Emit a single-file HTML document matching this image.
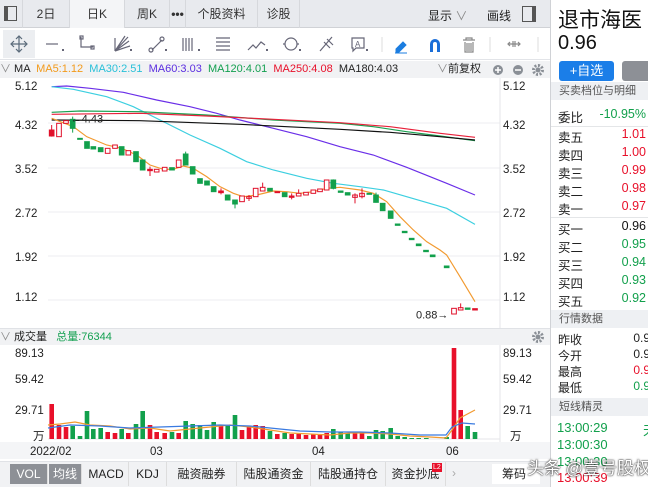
<!DOCTYPE html>
<html><head><meta charset="utf-8"><style>
*{margin:0;padding:0;box-sizing:border-box}
body{width:648px;height:487px;overflow:hidden;background:#fff;font-family:"Liberation Sans","Noto Sans CJK SC",sans-serif;position:relative;color:#222}
.a{position:absolute;white-space:nowrap}
.tab{position:absolute;top:0;height:28px;line-height:28px;font-size:12px;text-align:center;color:#333;border-right:1px solid #d6d8dc}
.r{position:absolute;left:558px;font-size:12.5px;width:90px}
.r span{position:absolute;right:2px}
.hd{position:absolute;left:551px;width:97px;height:18px;background:#eef0f3;font-size:11px;color:#555;padding-left:8px;line-height:18px}
.bt{position:absolute;top:462px;height:24px;line-height:24px;font-size:12px;color:#222;text-align:center;border-right:1px solid #ddd}
</style></head><body>
<div class="a" style="left:0;top:0;width:550px;height:28px;background:#e8eaee;border-bottom:1px solid #d0d2d6"></div>
<div class="a" style="left:4px;top:6px;width:13px;height:15px;border:1.5px solid #555;border-left-width:4px"></div>
<div class="tab" style="left:22px;width:48px;border-left:1px solid #d6d8dc">2日</div>
<div class="tab" style="left:70px;width:55px;background:#f4f5f7">日K</div>
<div class="tab" style="left:125px;width:45px">周K</div>
<div class="tab" style="left:170px;width:16px;font-weight:bold">•••</div>
<div class="tab" style="left:186px;width:72px">个股资料</div>
<div class="tab" style="left:258px;width:42px">诊股</div>
<div class="a" style="left:428px;top:7px;font-size:12px">显示 <span style="color:#888">∨</span></div>
<div class="a" style="left:487px;top:7px;font-size:12px">画线</div>
<div class="a" style="left:522px;top:6px;width:14px;height:16px;border:1.5px solid #555;border-right-width:4px"></div>
<div class="a" style="left:0;top:29px;width:550px;height:31px;background:#fff;border-bottom:1px solid #e2e4e8"></div>
<div class="a" style="left:3px;top:30px;width:32px;height:28px;background:#eceef1"></div>
<svg class="a" style="left:0;top:29px" width="550" height="31">
<g stroke="#667" stroke-width="1.2" fill="none">
<path d="M11 15h16M19 7v16M14 12l-3 3 3 3M24 12l3 3-3 3M16 10l3-3 3 3M16 20l3 3 3-3" stroke="#5a6a7a"/>
<path d="M46 15h12"/><path d="M81 8v10h12"/><rect x="80" y="7" width="3" height="3"/><rect x="91" y="17" width="3" height="3"/>
<path d="M115 22l14-10M115 22l13-14M115 22l10-15M115 22l15-5M115 22v-13"/>
<path d="M152 21l10-10"/><circle cx="151" cy="21" r="2"/><circle cx="162" cy="10" r="2"/>
<path d="M183 9v13M186 9v13M189 9v13M192 9v13"/>
<path d="M216 9h14M216 13h14M216 17h14M216 21h14"/>
<path d="M248 21l5-5 3 3 5-6 4 3"/>
<circle cx="291" cy="15" r="6"/><path d="M283 15h2M297 15h2"/>
<path d="M320 22l12-14M324 13l6 6M327 10l6 6"/>
<path d="M352 9h12v10h-8l-3 3v-3h-1z"/>
</g>
<g fill="#667"><path d="M62 20h2v2h-2zM130 20h2v2h-2zM165 20h2v2h-2zM198 20h2v2h-2zM266 20h2v2h-2zM299 20h2v2h-2zM366 20h2v2h-2z"/></g>
<text x="355" y="18" font-size="8" fill="#667" font-family="Liberation Sans">A</text>
<line x1="382" y1="8" x2="382" y2="23" stroke="#ddd"/>
<path d="M396 20l7-7 3 3-7 7h-3z M395 24h12" fill="#1b7de0" stroke="#1b7de0" stroke-width="1"/>
<path d="M430 23v-8a5 5 0 0 1 10 0v8h-3v-8a2 2 0 0 0-4 0v8z" fill="#1b6ed8"/>
<path d="M463 11h12M466 11v-2h6v2M465 13v10h8v-10M467 14v8M469 14v8M471 14v8" stroke="#888" fill="none" stroke-width="1.2"/>
<line x1="490" y1="8" x2="490" y2="23" stroke="#ddd"/>
<path d="M508 15h12M513 12v6M515 12v6M510 13l-2 2 2 2M518 13l2 2-2 2" stroke="#888" fill="none" stroke-width="1.2"/>
<line x1="538" y1="8" x2="538" y2="23" stroke="#ddd"/>
</svg>
<div class="a" style="left:0;top:61px;width:550px;height:17px;background:#f1f2f4;font-size:11px;line-height:17px">
<span style="color:#888">∨</span> MA &nbsp;<span style="color:#f29a1a">MA5:1.12</span> &nbsp;<span style="color:#28c0d8">MA30:2.51</span> &nbsp;<span style="color:#5a2ee0">MA60:3.03</span> &nbsp;<span style="color:#13a050">MA120:4.01</span> &nbsp;<span style="color:#e8102a">MA250:4.08</span> &nbsp;<span>MA180:4.03</span></div>
<div class="a" style="left:437px;top:62px;font-size:11px;line-height:15px"><span style="color:#888">∨</span>前复权</div>
<svg class="a" style="left:490px;top:62px" width="56" height="16"><circle cx="8" cy="8" r="5" fill="#8a8f96"/><path d="M5 8h6M8 5v6" stroke="#fff" stroke-width="1.5"/><circle cx="28" cy="8" r="5" fill="#8a8f96"/><path d="M25 8h6" stroke="#fff" stroke-width="1.5"/><circle cx="48" cy="8" r="4.5" fill="none" stroke="#8a8f96" stroke-width="3" stroke-dasharray="2 1.5"/><circle cx="48" cy="8" r="2.5" fill="#8a8f96"/></svg>
<svg class="a" style="left:0;top:78px" width="550" height="250" font-family="Liberation Sans" font-size="11.5" fill="#222">
<g stroke="#eceef0"><line x1="48" y1="45" x2="500" y2="45"/><line x1="48" y1="90" x2="500" y2="90"/><line x1="48" y1="134" x2="500" y2="134"/><line x1="48" y1="178" x2="500" y2="178"/><line x1="48" y1="222" x2="500" y2="222"/></g>
<line x1="500" y1="0" x2="500" y2="250" stroke="#e4e6e8"/>
<text x="15" y="12">5.12</text><text x="15" y="51">4.32</text><text x="15" y="95">3.52</text><text x="15" y="139">2.72</text><text x="15" y="183">1.92</text><text x="15" y="223">1.12</text>
<text x="503" y="12">5.12</text><text x="503" y="51">4.32</text><text x="503" y="95">3.52</text><text x="503" y="139">2.72</text><text x="503" y="183">1.92</text><text x="503" y="223">1.12</text>
</svg>
<svg class="a" style="left:40px;top:80px" width="460" height="248" viewBox="0 0 1380 744">
<g fill="none" stroke-width="3.5">
<polyline stroke="#6a2ee8" points="35,20 80,18 150,25 250,37 350,60 450,80 530,100 600,120 700,145 800,170 900,200 1000,225 1100,262 1220,310 1305,345"/>
<polyline stroke="#3ccfe0" points="35,20 100,28 200,50 280,80 360,120 450,165 540,205 620,245 700,270 800,295 880,310 960,320 1030,330 1100,350 1220,385 1305,433"/>
<polyline stroke="#1aa050" points="35,97 120,93 300,95 500,105 700,120 900,130 1000,140 1100,155 1200,168 1305,182"/>
<polyline stroke="#e8203a" points="35,103 300,100 500,108 700,118 900,128 1050,140 1200,160 1305,172"/>
<polyline stroke="#111" points="35,120 300,122 600,133 900,148 1050,157 1200,170 1305,180"/>
<polyline stroke="#f29a30" points="35,115 100,140 140,170 200,195 245,205 290,225 330,255 370,268 400,268 430,258 460,265 500,290 540,320 580,340 610,350 650,345 700,333 740,335 780,340 820,335 860,325 900,322 960,330 1000,340 1040,365 1080,410 1120,450 1160,485 1200,510 1220,525 1260,590 1305,665"/>
</g>
<g fill="#fff" stroke="#e0102a" stroke-width="3">
<rect x="28" y="150" width="14" height="18" fill="#e0102a"/><rect x="50" y="130" width="14" height="40"/><rect x="71" y="122" width="14" height="8"/>
<rect x="196" y="205" width="14" height="15"/><rect x="218" y="195" width="14" height="10"/><rect x="258" y="212" width="14" height="13"/>
<rect x="323" y="268" width="14" height="4" fill="#e0102a"/><rect x="343" y="268" width="14" height="8"/><rect x="367" y="262" width="14" height="11"/>
<rect x="409" y="240" width="14" height="22"/><rect x="536" y="333" width="14" height="5" fill="#e0102a"/><rect x="599" y="348" width="14" height="17"/>
<rect x="620" y="350" width="14" height="5"/><rect x="640" y="325" width="14" height="25"/><rect x="661" y="322" width="14" height="11"/>
<rect x="705" y="335" width="14" height="3" fill="#e0102a"/><rect x="748" y="348" width="14" height="4" fill="#e0102a"/><rect x="769" y="340" width="14" height="8"/>
<rect x="791" y="337" width="14" height="8"/><rect x="813" y="330" width="14" height="10"/><rect x="833" y="327" width="14" height="8"/>
<rect x="853" y="300" width="14" height="30"/><rect x="938" y="345" width="14" height="7"/><rect x="959" y="340" width="14" height="10"/>
<rect x="1235" y="685" width="14" height="17"/><rect x="1255" y="683" width="14" height="7"/><rect x="1298" y="686" width="14" height="4" fill="#e0102a"/>
</g>
<g stroke="#e0102a" stroke-width="3"><path d="M35 135v35M330 260v28M543 325v18M627 345v18M668 308v15M755 340v18M776 328v12M945 340v30M966 325v30M1262 670v15"/></g>
<g fill="#12a04c" stroke="#12a04c" stroke-width="3">
<path d="M98 110v48M437 215v40M585 360v25M880 298v30M1008 338v30"/>
<rect x="91" y="118" width="14" height="27"/><rect x="113" y="175" width="14" height="3"/><rect x="134" y="185" width="14" height="20"/>
<rect x="153" y="200" width="14" height="7"/><rect x="175" y="203" width="14" height="12"/><rect x="238" y="200" width="14" height="25"/>
<rect x="281" y="215" width="14" height="30"/><rect x="301" y="240" width="14" height="30"/><rect x="389" y="263" width="14" height="7"/>
<rect x="430" y="222" width="14" height="33"/><rect x="451" y="260" width="14" height="22"/><rect x="473" y="296" width="14" height="14"/>
<rect x="494" y="303" width="14" height="12"/><rect x="514" y="320" width="14" height="15"/><rect x="556" y="345" width="14" height="15"/>
<rect x="578" y="360" width="14" height="12"/><rect x="683" y="325" width="14" height="8"/><rect x="727" y="338" width="14" height="12"/>
<rect x="873" y="300" width="14" height="25"/><rect x="895" y="333" width="14" height="4"/><rect x="916" y="338" width="14" height="7"/>
<rect x="981" y="340" width="14" height="3"/><rect x="1001" y="345" width="14" height="22"/><rect x="1021" y="370" width="14" height="22"/>
<rect x="1045" y="393" width="14" height="22"/><rect x="1066" y="432" width="14" height="4"/><rect x="1087" y="454" width="14" height="4"/>
<rect x="1108" y="475" width="14" height="4"/><rect x="1129" y="492" width="14" height="5"/><rect x="1151" y="511" width="14" height="4"/>
<rect x="1171" y="525" width="14" height="5"/><rect x="1213" y="558" width="14" height="5"/><rect x="1276" y="684" width="14" height="4"/>
</g>
<text x="92" y="127" font-size="33" fill="#222" font-family="Liberation Sans">←4.43</text>
<text x="1128" y="716" font-size="33" fill="#222" font-family="Liberation Sans">0.88→</text>
</svg>
<div class="a" style="left:0;top:328px;width:550px;height:17px;background:#f1f2f4;border-top:1px solid #e0e2e6;font-size:11px;line-height:17px"><span style="color:#888">∨</span> 成交量 &nbsp; <span style="color:#13a050">总量:76344</span></div>
<svg class="a" style="left:531px;top:330px" width="14" height="14"><circle cx="7" cy="7" r="4.5" fill="none" stroke="#8a8f96" stroke-width="3" stroke-dasharray="2 1.5"/><circle cx="7" cy="7" r="2.5" fill="#8a8f96"/></svg>
<svg class="a" style="left:0;top:345px" width="550" height="117" font-family="Liberation Sans" font-size="11.5" fill="#222">
<line x1="500" y1="0" x2="500" y2="97" stroke="#e4e6e8"/>
<line x1="48" y1="94" x2="500" y2="94" stroke="#e4e6e8"/>
<text x="15" y="12">89.13</text><text x="15" y="38">59.42</text><text x="15" y="69">29.71</text><text x="33" y="95">万</text>
<text x="503" y="12">89.13</text><text x="503" y="38">59.42</text><text x="503" y="69">29.71</text><text x="510" y="95">万</text>
<rect x="0" y="97" width="550" height="17" fill="#f4f5f7"/>
<text x="30" y="110">2022/02</text><text x="150" y="110">03</text><text x="312" y="110">04</text><text x="446" y="110">06</text>
</svg>
<svg class="a" style="left:0;top:320px" width="550" height="120">
<g transform="translate(0,-320)">
<g fill="#e8102a">
<rect x="49.4" y="404" width="4.6" height="35"/><rect x="56.7" y="425" width="4.6" height="14"/><rect x="63.7" y="427" width="4.6" height="12"/>
<rect x="105.4" y="432" width="4.6" height="7"/><rect x="112.7" y="433" width="4.6" height="6"/><rect x="126" y="433" width="4.6" height="6"/>
<rect x="147.7" y="425" width="4.6" height="14"/><rect x="154.4" y="432" width="4.6" height="7"/><rect x="162.4" y="433" width="4.6" height="6"/>
<rect x="176.4" y="433" width="4.6" height="6"/><rect x="218.7" y="426" width="4.6" height="13"/><rect x="239.7" y="430" width="4.6" height="9"/>
<rect x="246.7" y="427" width="4.6" height="12"/><rect x="253.4" y="425" width="4.6" height="14"/><rect x="260.4" y="426" width="4.6" height="13"/>
<rect x="275" y="434" width="4.6" height="5"/><rect x="289.4" y="434" width="4.6" height="5"/><rect x="296.4" y="434" width="4.6" height="5"/>
<rect x="303.7" y="435" width="4.6" height="4"/><rect x="311" y="434" width="4.6" height="5"/><rect x="317.7" y="434" width="4.6" height="5"/>
<rect x="324.4" y="433" width="4.6" height="6"/><rect x="352.7" y="432" width="4.6" height="7"/><rect x="359.7" y="433" width="4.6" height="6"/>
<rect x="451.7" y="348" width="4.6" height="91"/><rect x="458.4" y="410" width="4.6" height="29"/>
</g>
<g fill="#12a04c">
<rect x="70.4" y="426" width="4.6" height="13"/><rect x="77.7" y="436" width="4.6" height="3"/><rect x="84.7" y="411" width="4.6" height="28"/>
<rect x="91" y="429" width="4.6" height="10"/><rect x="98.4" y="428" width="4.6" height="11"/><rect x="119.4" y="429" width="4.6" height="10"/>
<rect x="133.7" y="424" width="4.6" height="15"/><rect x="140.4" y="411" width="4.6" height="28"/><rect x="169.7" y="432" width="4.6" height="7"/>
<rect x="183.4" y="421" width="4.6" height="18"/><rect x="190.4" y="424" width="4.6" height="15"/><rect x="197.7" y="425" width="4.6" height="14"/>
<rect x="204.7" y="430" width="4.6" height="9"/><rect x="211.4" y="422" width="4.6" height="17"/><rect x="225.4" y="426" width="4.6" height="13"/>
<rect x="232.7" y="415" width="4.6" height="24"/><rect x="267.7" y="431" width="4.6" height="8"/><rect x="282.4" y="433" width="4.6" height="6"/>
<rect x="331" y="429" width="4.6" height="10"/><rect x="338.4" y="432" width="4.6" height="7"/><rect x="345.4" y="433" width="4.6" height="6"/>
<rect x="367" y="436" width="4.6" height="3"/><rect x="373.7" y="430" width="4.6" height="9"/><rect x="380.4" y="431" width="4.6" height="8"/>
<rect x="388.4" y="428" width="4.6" height="11"/><rect x="395.4" y="436" width="4.6" height="3"/><rect x="402.4" y="437" width="4.6" height="2"/>
<rect x="409.4" y="438" width="4.6" height="1"/><rect x="416.4" y="438" width="4.6" height="1"/><rect x="424" y="438" width="4.6" height="1"/>
<rect x="444.4" y="437" width="4.6" height="2"/><rect x="465.4" y="426" width="4.6" height="13"/><rect x="472.7" y="432" width="4.6" height="7"/>
</g>
<polyline fill="none" stroke="#f29a30" stroke-width="1.2" points="48,425 60,424 75,422 90,425 110,426 130,429 150,428 170,431 190,429 210,427 230,425 250,427 270,430 290,433 310,434 330,435 350,433 370,433 390,434 410,436 430,437 446,438 452,430 460,418 475,410"/>
<polyline fill="none" stroke="#3a7ae0" stroke-width="1.2" points="48,428 70,425 100,426 130,428 160,427 190,426 220,425 250,426 280,429 300,431 330,432 360,432 390,433 420,435 446,435 452,427 462,423 475,424"/>
</g></svg>
<div class="a" style="left:0;top:461px;width:550px;height:26px;background:#f1f2f4;border-top:1px solid #e0e2e6"></div>
<div class="bt" style="left:10px;width:38px;background:#8d9096;color:#fff;top:464px;height:20px;line-height:20px">VOL</div>
<div class="bt" style="left:49px;width:33px;background:#8d9096;color:#fff;top:464px;height:20px;line-height:20px">均线</div>
<div class="bt" style="left:84px;width:45px">MACD</div>
<div class="bt" style="left:129px;width:38px">KDJ</div>
<div class="bt" style="left:167px;width:70px">融资融券</div>
<div class="bt" style="left:237px;width:74px">陆股通资金</div>
<div class="bt" style="left:311px;width:75px">陆股通持仓</div>
<div class="bt" style="left:386px;width:60px">资金抄底</div>
<div class="a" style="left:432px;top:463px;background:#e8102a;color:#fff;font-size:7px;padding:0 1px;line-height:9px">L2</div>
<div class="a" style="left:452px;top:466px;font-size:12px;color:#aaa">›</div>
<div class="a" style="left:492px;top:464px;width:48px;height:20px;background:#fff;font-size:12px;line-height:20px;padding-left:10px">筹码</div>
<div class="a" style="left:550px;top:0;width:1px;height:487px;background:#d0d2d6"></div>
<div class="a" style="left:558px;top:4px;font-size:21px;color:#111">退市海医</div>
<div class="a" style="left:558px;top:32px;font-size:20px;color:#111">0.96</div>
<div class="a" style="left:559px;top:61px;width:55px;height:20px;background:#1b7ee8;border-radius:3px;color:#fff;font-size:13px;text-align:center;line-height:20px">+自选</div>
<div class="a" style="left:622px;top:61px;width:30px;height:20px;background:#8d9096;border-radius:3px"></div>
<div class="hd" style="top:82px">买卖档位与明细</div>
<div class="r" style="top:107px">委比<span style="color:#12a04c">-10.95%</span></div>
<div class="a" style="left:551px;top:126px;width:97px;height:1px;background:#e4e6e8"></div>
<div class="r" style="top:127px">卖五<span style="color:#e8102a">1.01</span></div>
<div class="r" style="top:145px">卖四<span style="color:#e8102a">1.00</span></div>
<div class="r" style="top:163px">卖三<span style="color:#e8102a">0.99</span></div>
<div class="r" style="top:181px">卖二<span style="color:#e8102a">0.98</span></div>
<div class="r" style="top:199px">卖一<span style="color:#e8102a">0.97</span></div>
<div class="a" style="left:551px;top:217px;width:97px;height:1px;background:#e4e6e8"></div>
<div class="r" style="top:219px">买一<span style="color:#111">0.96</span></div>
<div class="r" style="top:237px">买二<span style="color:#12a04c">0.95</span></div>
<div class="r" style="top:255px">买三<span style="color:#12a04c">0.94</span></div>
<div class="r" style="top:273px">买四<span style="color:#12a04c">0.93</span></div>
<div class="r" style="top:291px">买五<span style="color:#12a04c">0.92</span></div>
<div class="hd" style="top:310px">行情数据</div>
<div class="r" style="top:331px;font-size:12px">昨收<span style="right:-2px">0.9</span></div>
<div class="r" style="top:347px;font-size:12px">今开<span style="right:-2px">0.9</span></div>
<div class="r" style="top:363px;font-size:12px">最高<span style="right:-2px;color:#e8102a">0.9</span></div>
<div class="r" style="top:379px;font-size:12px">最低<span style="right:-2px;color:#12a04c">0.9</span></div>
<div class="hd" style="top:398px">短线精灵</div>
<div class="a" style="left:551px;top:416px;width:97px;height:71px;background:#fff"></div>
<div class="a" style="left:557px;top:420px;font-size:13px;color:#12a04c">13:00:29</div>
<div class="a" style="left:557px;top:437px;font-size:13px;color:#12a04c">13:00:30</div>
<div class="a" style="left:557px;top:454px;font-size:13px;color:#12a04c">13:00:30</div>
<div class="a" style="left:557px;top:470px;font-size:13px;color:#e8102a">13:00:39</div>
<div class="a" style="left:643px;top:420px;font-size:13px;color:#12a04c">天</div>
<div class="a" style="left:527px;top:454px;font-size:17px;color:#fff;text-shadow:0 0 2px #333,0 0 1px #000">头条 @壹号股权</div>
</body></html>
